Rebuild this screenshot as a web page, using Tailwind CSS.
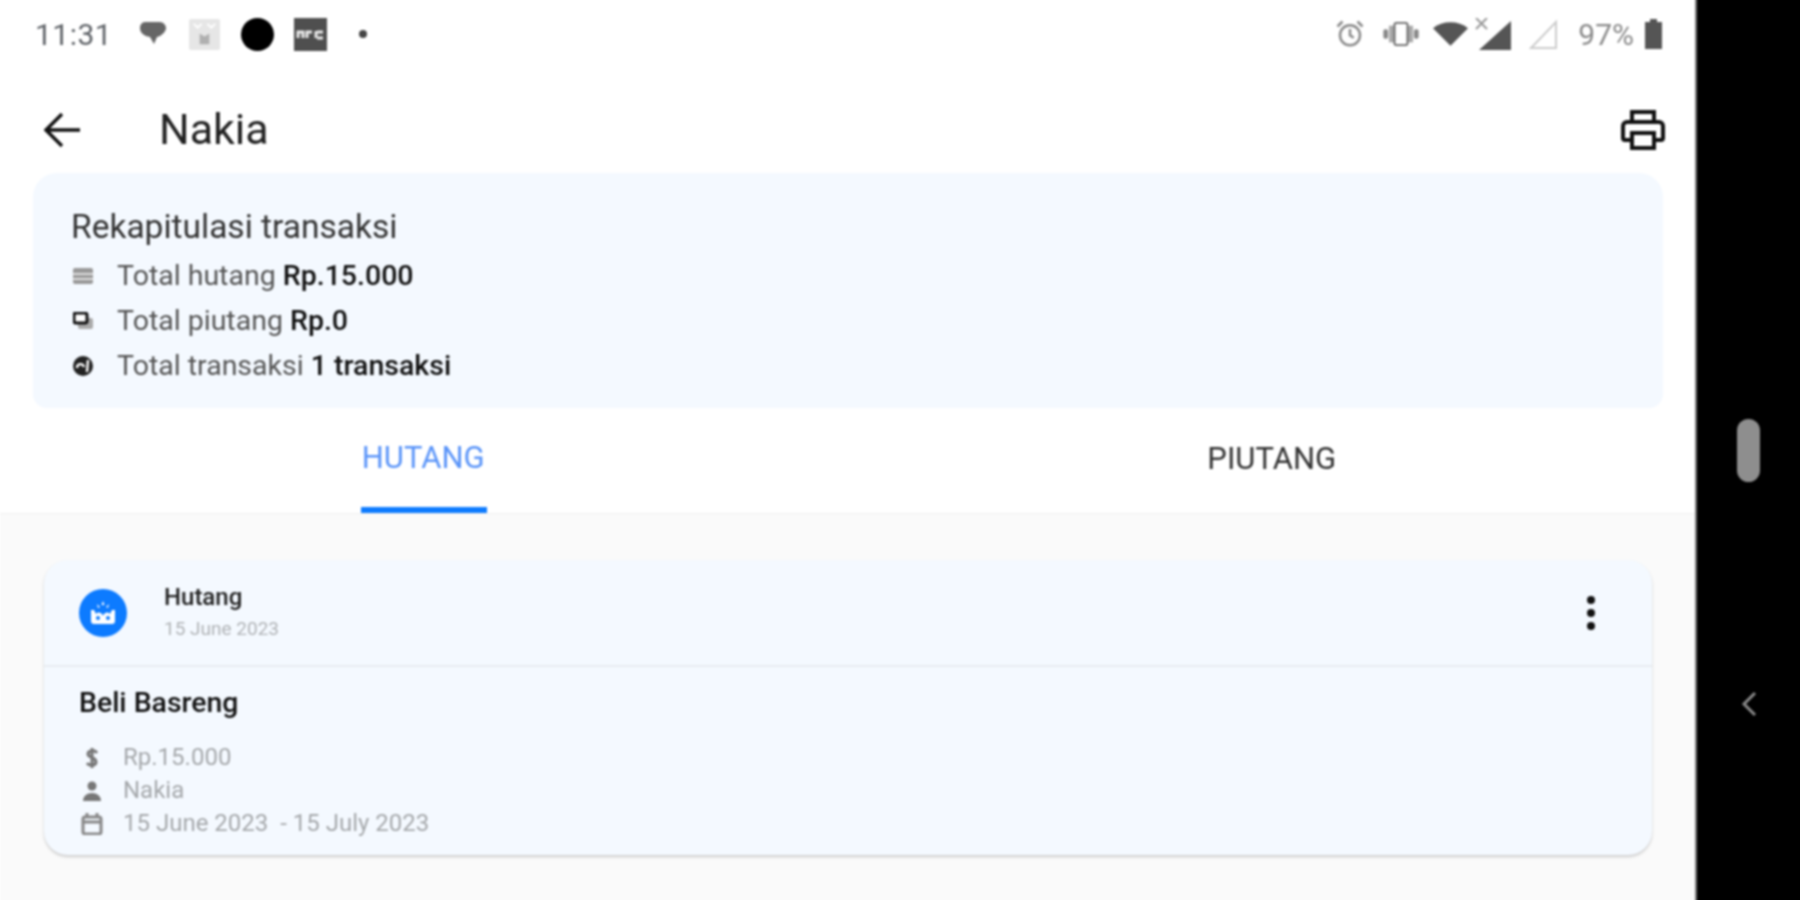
<!DOCTYPE html>
<html><head><meta charset="utf-8"><script src="https://cdn.jsdelivr.net/npm/@tailwindcss/browser@4"></script></head>
<body class="m-0 bg-black">
<div class="w-[1800px] h-[900px] overflow-hidden">
<div class="flex w-[1810px] h-[910px] -ml-[5px] -mt-[5px] font-['Roboto',sans-serif] blur-[0.9px]">
  <main class="w-[1702px] h-full pl-[5px] pt-[5px] bg-white flex flex-col">
    <div class="h-[68px] flex items-center pl-[35px] pr-[35px] text-[#5f6368] shrink-0">
      <span class="text-[30px] tracking-[0.5px]">11:31</span>
      <svg class="ml-[27px] w-[28px] h-[28px]" viewBox="0 0 28 28"><path fill="#666" d="M6 2h15c3 0 6 3 6 6s-3 6-6 8l-3 1-3 7-4-7C5 16 1 13 1 8c0-3 2-6 5-6z"/></svg>
      <svg class="ml-[22px] w-[31px] h-[31px]" viewBox="0 0 32 32"><rect width="32" height="32" rx="2" fill="#e6e6e6"/><path stroke="#fff" stroke-width="2" fill="none" d="M5 5l4 4 4-4M19 5l4 4 4-4"/><path d="M11 15l5 3 5-3v11H11z" fill="#b0b0b0"/></svg>
      <div class="ml-[21px] w-[33px] h-[33px] rounded-full bg-black"></div>
      <svg class="ml-[20px] w-[33px] h-[33px]" viewBox="0 0 33 33"><rect width="33" height="33" fill="#4f4f4f"/><path stroke="#e8e8e8" stroke-width="3" fill="none" d="M4 20v-6h5v6M13 20v-6h5M23 14h6M23 20h6M22 13v7"/></svg>
      <div class="ml-[32px] w-[8px] h-[8px] rounded-full bg-[#444]"></div>
      <div class="ml-auto flex items-center">
        <svg class="w-[30px] h-[30px]" viewBox="0 0 24 24" fill="none" stroke="#8a8a8a" stroke-width="2"><circle cx="12" cy="13" r="8"/><path d="M12 8v5l3 2M2 6l4-4M22 6l-4-4"/></svg>
        <svg class="ml-[18px] w-[36px] h-[26px]" viewBox="0 0 38 28"><rect x="0" y="9" width="5" height="10" rx="2" fill="#888"/><rect x="6" y="5" width="6" height="18" fill="#aaa"/><rect x="26" y="5" width="6" height="18" fill="#aaa"/><rect x="33" y="9" width="5" height="10" rx="2" fill="#888"/><rect x="12" y="2" width="14" height="24" rx="2" fill="#fff" stroke="#666" stroke-width="2"/></svg>
        <svg class="ml-[14px] w-[35px] h-[24px]" viewBox="0 0 36 24"><path fill="#555" d="M0 6c10-8 26-8 36 0L18 24z"/></svg>
        <div class="w-[45px] h-[32px]"><svg class="w-full h-full" viewBox="0 0 45 32"><path fill="#555" d="M43 3v29H11z"/><path stroke="#999" stroke-width="2" d="M8 0l11 11M19 0L8 11"/></svg></div>
        <svg class="ml-[15px] w-[30px] h-[30px]" viewBox="0 0 30 30"><path fill="none" stroke="#ccc" stroke-width="2" d="M28 3v26H3z"/></svg>
        <span class="ml-[20px] text-[30px] text-[#8a8a8a]">97%</span>
        <svg class="ml-[11px] w-[17px] h-[30px]" viewBox="0 0 17 30"><path fill="#555" d="M5 0h7v3h5v27H0V3h5z"/></svg>
      </div>
    </div>
    <header class="h-[105px] shrink-0 flex items-center pl-[44px] pr-[32px] pt-[18px]">
      <svg class="w-[36px] h-[36px]" viewBox="0 0 36 36" fill="none" stroke="#111" stroke-width="3.4"><path d="M36 18H3M18 2L2 18l16 16"/></svg>
      <h1 class="ml-[79px] text-[43px] leading-none text-[#222]">Nakia</h1>
      <svg class="ml-auto w-[44px] h-[40px]" viewBox="0 0 44 40" fill="none" stroke="#111" stroke-width="4"><path d="M11 12V2h22v10M11 30H4a2 2 0 0 1-2-2V16a4 4 0 0 1 4-4h32a4 4 0 0 1 4 4v12a2 2 0 0 1-2 2h-7"/><rect x="11" y="23" width="22" height="15"/></svg>
    </header>
    <section class="mx-[33px] w-[1630px] h-[235px] shrink-0 bg-[#f4f9ff] rounded-t-[24px] rounded-b-[14px] pl-[38px] pt-[34px]">
      <h2 class="text-[33.5px] leading-[40px] text-[#333]">Rekapitulasi transaksi</h2>
      <div class="mt-[6px] flex flex-col text-[28.5px] leading-[45px] text-[#555]">
        <div class="flex items-center"><svg class="ml-[2px] w-[20px] h-[16px]" viewBox="0 0 20 16"><rect width="20" height="16" rx="2" fill="#999"/><path stroke="#ddd" stroke-width="2" d="M0 6h20M0 11h20"/></svg><span class="ml-[24px]">Total hutang <span class="text-[#111] font-medium">Rp.15.000</span></span></div>
        <div class="flex items-center"><svg class="ml-[2px] w-[20px] h-[18px]" viewBox="0 0 20 18"><rect x="5" y="6" width="15" height="11" rx="2" fill="#aaa"/><rect x="1" y="1" width="13" height="10" rx="2" fill="#fff" stroke="#111" stroke-width="3"/></svg><span class="ml-[24px]">Total piutang <span class="text-[#111] font-medium">Rp.0</span></span></div>
        <div class="flex items-center"><svg class="ml-[2px] w-[20px] h-[20px]" viewBox="0 0 20 20"><circle cx="10" cy="10" r="10" fill="#222"/><path stroke="#fff" stroke-width="2.400" fill="none" d="M4 12c0-5 6-5 7-1M15 4l-1 12"/></svg><span class="ml-[24px]">Total transaksi <span class="text-[#111] font-medium">1 transaksi</span></span></div>
      </div>
    </section>
    <nav class="h-[106px] shrink-0 grid grid-cols-2 border-b border-[#f0f0f0] text-[31px]">
      <div class="flex justify-center"><div class="w-[126px] h-full flex items-center justify-center border-b-[6px] border-[#0d7bff] pt-[2px] pr-[2px] text-[#5b95f9]">HUTANG</div></div>
      <div class="flex items-center justify-center pb-[3px] pr-[2px] text-[#333]">PIUTANG</div>
    </nav>
    <div class="flex-1 bg-[#fafafa] pt-[46px] pl-[44px] pr-[45px]">
      <article class="h-[295px] bg-[#f4f9ff] rounded-[24px] shadow-[0_2px_3px_rgba(0,0,0,0.18)]">
        <div class="h-[107px] border-b-2 border-[#e8ecf1] flex items-center pl-[35px] pr-[56px]">
          <div class="w-[48px] h-[48px] rounded-full bg-[#0d7bff] flex items-center justify-center">
            <svg class="w-[28px] h-[26px]" viewBox="0 0 28 26" fill="#fff"><path d="M14 1l1.500 4h-3zM8 4l3 3-2 1zM20 4l-3 3 2 1z"/><path d="M2 10h3l2 4a4 4 0 0 1 7 2 4 4 0 0 1 7-2l2-4h3v11a3 3 0 0 1-3 3H5a3 3 0 0 1-3-3z"/><circle cx="9" cy="18" r="2" fill="#0d7bff"/><circle cx="19" cy="18" r="2" fill="#0d7bff"/></svg>
          </div>
          <div class="ml-[37px] flex flex-col -mt-[2px]">
            <span class="text-[24px] leading-[30px] font-medium text-[#222]">Hutang</span>
            <span class="mt-[5px] text-[19px] leading-[24px] text-[#b0b3b6]">15 June 2023</span>
          </div>
          <svg class="ml-auto w-[10px] h-[36px]" viewBox="0 0 10 36" fill="#111"><circle cx="5" cy="5" r="4"/><circle cx="5" cy="18" r="4"/><circle cx="5" cy="31" r="4"/></svg>
        </div>
        <div class="pl-[35px] pt-[18px]">
          <h3 class="text-[28.4px] leading-[36px] font-medium text-[#111]">Beli Basreng</h3>
          <div class="mt-[20px] flex flex-col text-[24px] leading-[33px] text-[#a5a8ab]">
            <div class="flex items-center"><svg class="ml-[7px] w-[12px] h-[20px]" viewBox="0 0 12 20" fill="none" stroke="#777" stroke-width="3"><path d="M11 5C9 2 2 2 2 6c0 4 8 3 8 8 0 4-7 4-9 1M6 0v20"/></svg><span class="ml-[25px]">Rp.15.000</span></div>
            <div class="flex items-center"><svg class="w-[20px] h-[20px] ml-[3px]" viewBox="0 0 20 20" fill="#777"><circle cx="10" cy="5" r="4.500"/><path d="M1 20c0-5 4-8 9-8s9 3 9 8z"/></svg><span class="ml-[21px]">Nakia</span></div>
            <div class="flex items-center"><svg class="ml-[2px] w-[22px] h-[22px]" viewBox="0 0 22 22" fill="none" stroke="#888" stroke-width="3"><rect x="2" y="4" width="18" height="17" rx="2"/><path d="M2 9h18M6 0v5M16 0v5"/></svg><span class="ml-[20px]">15 June 2023&nbsp; - 15 July 2023</span></div>
          </div>
        </div>
      </article>
    </div>
  </main>
  <aside class="flex-1 bg-black flex flex-col items-center border-l-2 border-[#777] -ml-[2px] pr-[5px] pt-[5px]">
    <div class="mt-[419px] w-[23px] h-[63px] rounded-full bg-[#8e8e8e]"></div>
    <svg class="mt-[209px] w-[16px] h-[26px]" viewBox="0 0 16 26" fill="none" stroke="#888" stroke-width="3"><path d="M14 2L3 13l11 11"/></svg>
  </aside>
</div>
</div>
</body></html>
